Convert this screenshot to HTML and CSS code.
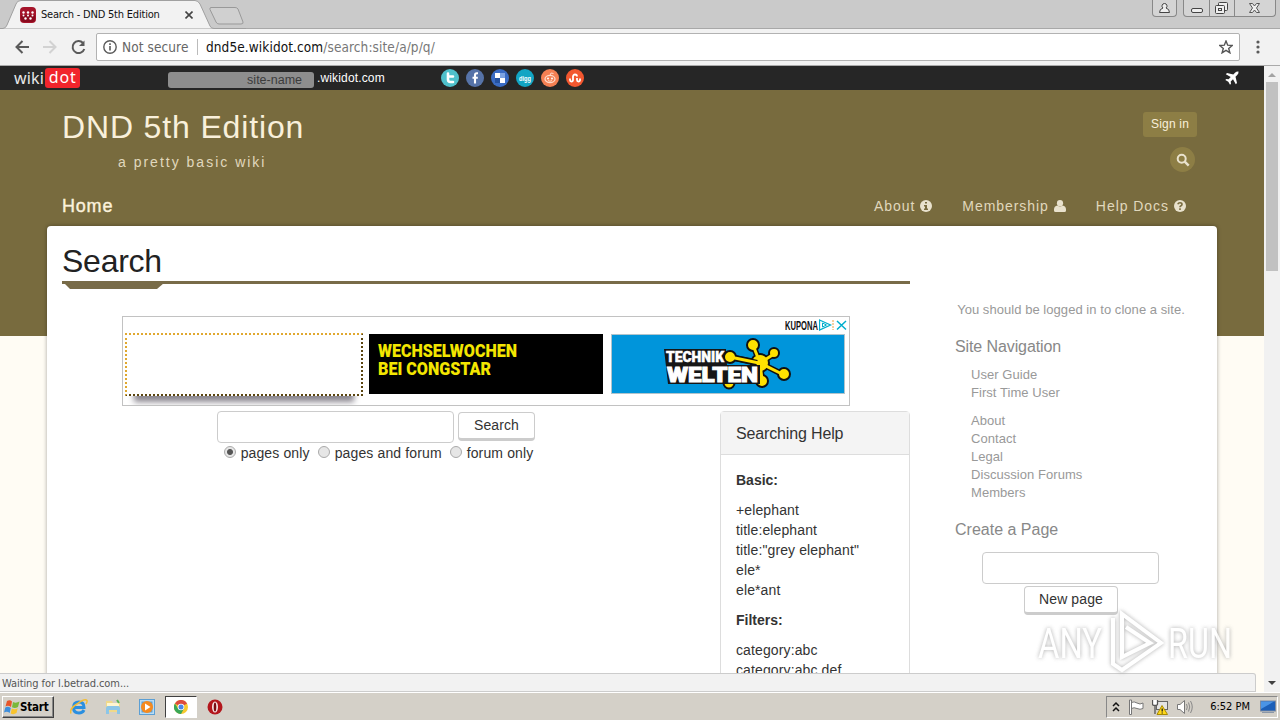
FILE: index.html
```html
<!DOCTYPE html>
<html lang="en">
<head>
    <meta charset="UTF-8">
    <meta name="viewport" content="width=device-width, initial-scale=1.0">
    <title>Search - DND 5th Edition</title>
    <link rel="stylesheet" href="styles.css">
</head>
<body>
    <div class="tabstrip">
        <svg class="tab-shape" width="246" height="29" viewBox="0 0 246 29">
            <path d="M0 28.500H3Q6 28 7 25L16 4Q17 .5 21 .5H195Q198 .5 200 4L210 26Q211 28.500 214 28.500H246V29H0Z" fill="#f2f2f2" stroke="#a0a0a0"/>
            <path d="M211 7.500H235Q237 7.500 238 9L243 22Q243.500 24 241 24H219Q217 24 216 22L210 9.500Q209.500 7.500 211 7.500Z" fill="#d0d0d0" stroke="#999"/>
        </svg>
        <div class="tab">
            <svg width="16" height="16" viewBox="0 0 16 16">
                <rect width="16" height="16" rx="4" fill="#a5142a"/>
                <path d="M1 8H15V12Q15 15 12 15H4Q1 15 1 12Z" fill="#8a0a1e"/>
                <g fill="#fff"><circle cx="3.500" cy="5.500" r="1.200"/><circle cx="8" cy="5.500" r="1.200"/><circle cx="12.500" cy="5.500" r="1.200"/><circle cx="3.500" cy="8.500" r="1"/><circle cx="8" cy="8.500" r="1"/><circle cx="12.500" cy="8.500" r="1"/><circle cx="5.500" cy="11.500" r="1.200"/><circle cx="10.500" cy="11.500" r="1.200"/></g>
            </svg>
            <span class="tab-title">Search - DND 5th Edition</span>
            <svg width="8" height="8" viewBox="0 0 8 8"><path d="M.5 .5L7.500 7.500M7.500 .5L.5 7.500" stroke="#444" stroke-width="1.600"/></svg>
        </div>
        <div class="window-buttons">
            <span class="win user"><svg width="24" height="16" viewBox="0 0 24 16"><path d="M11.500 3.500a2.500 2.500 0 0 1 1.500 4.500Q16.500 9 16.500 12.500H6.500Q6.500 9 10 8A2.500 2.500 0 0 1 11.500 3.500Z" fill="#eee" stroke="#444"/></svg></span>
            <span class="win group">
                <svg width="93" height="16" viewBox="0 0 93 16">
                    <path d="M25.500 0V16M50.500 0V16" stroke="#888"/>
                    <rect x="7.500" y="8.500" width="11" height="4" rx="1.500" fill="#eee" stroke="#444"/>
                    <rect x="34.500" y="2.500" width="9" height="8" rx="1" fill="#eee" stroke="#444"/>
                    <rect x="31.500" y="5.500" width="9" height="8" rx="1" fill="#eee" stroke="#444"/>
                    <rect x="34.500" y="8.500" width="3" height="2" fill="none" stroke="#444"/>
                    <path d="M65.500 3.500H68.500L70.500 6L72.500 3.500H75.500L72.500 8L75.500 12.500H72.500L70.500 10L68.500 12.500H65.500L68.500 8Z" fill="#eee" stroke="#555"/>
                </svg>
            </span>
        </div>
    </div>

    <div class="toolbar">
        <svg class="nav-icons" width="76" height="18" viewBox="0 0 76 18" fill="none" stroke="#5a5a5a" stroke-width="2">
            <path d="M16 9H4M9.500 3L3.500 9L9.500 15"/>
            <path d="M30 9H42M36.500 3L42.500 9L36.500 15" stroke="#d2d2d2"/>
            <path d="M70 5A6 6 0 1 0 71.300 11"/><path d="M71.500 2.500V8H66Z" fill="#5a5a5a" stroke="none"/>
        </svg>
        <div class="address">
            <svg width="14" height="14" viewBox="0 0 14 14"><circle cx="7" cy="7" r="6.200" fill="none" stroke="#5a5a5a" stroke-width="1.400"/><path d="M7 6V10.500M7 3.300V4.900" stroke="#5a5a5a" stroke-width="1.600"/></svg>
            <span class="not-secure">Not secure</span>
            <span class="url">dnd5e.wikidot.com<span class="path">/search:site/a/p/q/</span></span>
            <svg class="star" width="14" height="14" viewBox="0 0 14 14"><path d="M7 1L8.700 5.200L13.200 5.500L9.700 8.400L10.900 12.800L7 10.300L3.100 12.800L4.300 8.400L.8 5.500L5.300 5.200Z" fill="none" stroke="#555" stroke-width="1.400"/></svg>
        </div>
        <svg class="menu" width="4" height="14" viewBox="0 0 4 14" fill="#5a5a5a"><circle cx="2" cy="2" r="1.600"/><circle cx="2" cy="7" r="1.600"/><circle cx="2" cy="12" r="1.600"/></svg>
    </div>

    <div class="viewport">
        <div class="page">
            <div class="topbar">
                <div class="wikidot-logo">wiki<span>dot</span></div>
                <div class="site-name">site-name</div>
                <span class="domain">.wikidot.com</span>
                <div class="social">
                    <svg width="18" height="18" viewBox="0 0 18 18"><circle cx="9" cy="9" r="9" fill="#4fc0cb"/><path d="M7 4.500V10.500Q7 13 9.500 13H12M7 7.500H12" fill="none" stroke="#fff" stroke-width="2.600" stroke-linecap="round"/></svg>
                    <svg width="18" height="18" viewBox="0 0 18 18"><circle cx="9" cy="9" r="9" fill="#5673a8"/><path d="M12 4.300H10.800Q9 4.300 9 6.300V14.500M6.500 8.800H11.800" fill="none" stroke="#fff" stroke-width="2.100"/></svg>
                    <svg width="18" height="18" viewBox="0 0 18 18"><circle cx="9" cy="9" r="9" fill="#3a6cc4"/><path d="M4 4H9V9H4ZM9 9H14V14H9Z" fill="#fff"/><path d="M9 4H14V9H9Z" fill="#7da4e3"/><path d="M4 9H9V14H4Z" fill="#2552a0"/></svg>
                    <svg width="18" height="18" viewBox="0 0 18 18"><circle cx="9" cy="9" r="9" fill="#12a5c4"/><text x="3" y="11.500" textLength="12" lengthAdjust="spacingAndGlyphs" class="digg">digg</text></svg>
                    <svg width="18" height="18" viewBox="0 0 18 18"><circle cx="9" cy="9" r="9" fill="#f58053"/><ellipse cx="9" cy="10" rx="5" ry="3.600" fill="none" stroke="#ffd9c8" stroke-width="1.300"/><circle cx="7" cy="9.500" r="1" fill="#fff"/><circle cx="11" cy="9.500" r="1" fill="#fff"/><path d="M9 6.500L10 4L12.500 4.500M7 11.500Q9 13 11 11.500" fill="none" stroke="#ffd9c8"/></svg>
                    <svg width="18" height="18" viewBox="0 0 18 18"><circle cx="9" cy="9" r="9" fill="#f3572f"/><path d="M4 9.500V11A1.500 1.500 0 0 0 7 11V7.500A2 2 0 0 1 11 7.500M11 9V11A1.500 1.500 0 0 0 14 11V9.500" fill="none" stroke="#fff" stroke-width="1.800"/></svg>
                </div>
                <svg class="plane" width="14" height="14" viewBox="0 0 14 14"><path d="M13.500 .5Q11.500 .2 10 1.800L8.300 3.500L2 2L.8 3.200L5.700 6L3.600 8.300L1.300 8L.3 9L3.300 10.700L5 13.700L6 12.700L5.700 10.400L8 8.300L10.800 13.200L12 12L10.500 5.700L12.200 4Q13.800 2.500 13.500 .5Z" fill="#fff"/></svg>
            </div>

            <div class="header">
                <div class="brand">
                    <div class="site-title">DND 5th Edition</div>
                    <div class="tagline">a pretty basic wiki</div>
                </div>
                <div class="account">
                    <span class="sign-in">Sign in</span>
                    <span class="search-toggle"><svg width="14" height="14" viewBox="0 0 14 14" fill="none" stroke="#e9e2cd"><circle cx="5.700" cy="5.700" r="4" stroke-width="2"/><path d="M8.700 8.700L12.700 12.700" stroke-width="2.400"/></svg></span>
                </div>
            </div>

            <div class="navbar">
                <span class="home">Home</span>
                <span class="nav-item">About <svg width="12" height="12" viewBox="0 0 12 12"><circle cx="6" cy="6" r="6" fill="#e9e2cd"/><path d="M5 2H7V3.500H5ZM4 5H7V8.500H8V10H4V8.500H5V6.500H4Z" fill="#786b3e"/></svg></span>
                <span class="nav-item">Membership <svg width="12" height="12" viewBox="0 0 12 12" fill="#e9e2cd"><circle cx="6" cy="3.200" r="3.100"/><path d="M3.500 5.500Q6 7.500 8.500 5.500Q12 6 12 9.500V10.500Q12 12 10.500 12H1.500Q0 12 0 10.500V9.500Q0 6 3.500 5.500Z"/></svg></span>
                <span class="nav-item">Help Docs <svg width="12" height="12" viewBox="0 0 12 12"><circle cx="6" cy="6" r="6" fill="#e9e2cd"/><path d="M3.800 4.300Q4.300 2.800 6 2.800Q8 2.800 8 4.400Q8 5.300 6.700 5.900Q6 6.300 6 7.300M6 8.300V10" fill="none" stroke="#786b3e" stroke-width="1.600"/></svg></span>
            </div>

            <div class="container">
                <div class="main">
                    <h1 class="page-title"><span>Search</span></h1>
                    <div class="ad">
                        <div class="ad-top">
                            <svg width="34" height="12" viewBox="0 0 34 12"><text x="0" y="10.500" textLength="33" lengthAdjust="spacingAndGlyphs" class="kupona">KUPONA</text></svg>
                            <svg width="28" height="12" viewBox="0 0 28 12" fill="none" stroke="#00aecd"><path d="M.5 1L11.500 6L.5 11Z" stroke-width="1.300"/><path d="M3.500 4V8L7.500 6Z"/><path d="M14 1V11" stroke="#f0a040" stroke-dasharray="2 1"/><path d="M18 2L27 10.500M27 2L18 10.500" stroke-width="1.500"/></svg>
                        </div>
                        <div class="ad-cards">
                            <div class="card-empty"></div>
                            <div class="card-congstar">
                                <svg width="234" height="60" viewBox="0 0 234 60">
                                    <text x="9" y="23" textLength="139" lengthAdjust="spacingAndGlyphs">WECHSELWOCHEN</text>
                                    <text x="9" y="41" textLength="113" lengthAdjust="spacingAndGlyphs">BEI CONGSTAR</text>
                                </svg>
                            </div>
                            <div class="card-technik">
                                <svg width="234" height="60" viewBox="0 0 234 60">
                                    <g stroke="#111" stroke-width="2" fill="#ffe100">
                                        <path d="M148 28L141 10M148 28L162 19M148 28L172 40M148 28L118 22M148 28L150 45" stroke-width="6"/>
                                        <circle cx="141" cy="10" r="6"/><circle cx="162" cy="18" r="5"/><circle cx="172" cy="39" r="6"/><circle cx="150" cy="46" r="6"/><circle cx="117" cy="48" r="5.500"/>
                                        <circle cx="148" cy="28" r="9"/>
                                        <path d="M148 28L141 10M148 28L162 19M148 28L172 40M148 28L150 45" stroke="#ffe100" stroke-width="3"/>
                                    </g>
                                    <path d="M52 14H114L115 30H148V49H56Z" fill="#161616"/>
                                    <path d="M118 22L145 28" stroke="#111" stroke-width="6"/><circle cx="118" cy="22" r="6" fill="#ffe100" stroke="#111" stroke-width="2"/><path d="M118 22L147 28" stroke="#ffe100" stroke-width="3"/>
                                    <text x="54" y="27" textLength="58" lengthAdjust="spacingAndGlyphs" class="technik">TECHNIK</text>
                                    <text x="55" y="47" textLength="91" lengthAdjust="spacingAndGlyphs" class="welten">WELTEN</text>
                                </svg>
                            </div>
                        </div>
                    </div>
                    <div class="search-row">
                        <div class="search-form">
                            <div class="search-line">
                                <span class="field"></span>
                                <span class="btn">Search</span>
                            </div>
                            <div class="options">
                                <span class="option"><i class="radio checked"></i>pages only</span>
                                <span class="option"><i class="radio"></i>pages and forum</span>
                                <span class="option"><i class="radio"></i>forum only</span>
                            </div>
                        </div>
                        <div class="panel">
                            <div class="panel-heading">Searching Help</div>
                            <div class="panel-body">
                                <p><strong>Basic:</strong></p>
                                <p>+elephant<br>title:elephant<br>title:"grey elephant"<br>ele*<br>ele*ant</p>
                                <p><strong>Filters:</strong></p>
                                <p>category:abc<br>category:abc,def</p>
                            </div>
                        </div>
                    </div>
                </div>
                <div class="side">
                    <p class="clone-note">You should be logged in to clone a site.</p>
                    <h2>Site Navigation</h2>
                    <ul>
                        <li>User Guide</li>
                        <li>First Time User</li>
                    </ul>
                    <ul>
                        <li>About</li>
                        <li>Contact</li>
                        <li>Legal</li>
                        <li>Discussion Forums</li>
                        <li>Members</li>
                    </ul>
                    <h2 class="create">Create a Page</h2>
                    <div class="new-page">
                        <span class="field"></span>
                        <span class="btn">New page</span>
                    </div>
                </div>
            </div>
        </div>

        <div class="scrollbar">
            <svg width="16" height="16" viewBox="0 0 16 16"><path d="M4 11L8 7L12 11Z" fill="#a3a3a3"/></svg>
            <div class="thumb"></div>
            <svg width="16" height="16" viewBox="0 0 16 16"><path d="M4 5H12L8 9Z" fill="#404040"/></svg>
        </div>

        <div class="status">Waiting for l.betrad.com...</div>

        <svg class="watermark" width="220" height="70" viewBox="0 0 220 70">
            <text x="4" y="50" textLength="64" lengthAdjust="spacingAndGlyphs">ANY</text>
            <text x="134" y="50" textLength="64" lengthAdjust="spacingAndGlyphs">RUN</text>
            <path d="M79 10V56L88 62L127 35L88 6V49L116 35L92 19" fill="none" stroke="#fff" stroke-width="4"/>
        </svg>
    </div>

    <div class="taskbar">
        <div class="start">
            <svg width="16" height="16" viewBox="0 0 16 16"><path d="M3 2Q6 .5 8 2.500L7 8Q4 6 1.500 7.500Z" fill="#e8562a"/><path d="M9 3Q12 4.500 15.500 2.500L14 8Q11 10 8 8.300Z" fill="#7ab83a"/><path d="M1.300 8.500Q4 7 6.800 9L5.700 14Q3 12 0 13.500Z" fill="#3f8fdc"/><path d="M7.800 9.500Q11 11 13.700 9.200L12.500 14Q9.500 16 6.700 14.500Z" fill="#f9c42d"/></svg>
            <b>Start</b>
        </div>
        <div class="launch">
            <span class="task"><svg width="18" height="16" viewBox="0 0 18 16"><path d="M14 11Q12.500 14 9 14Q3.500 14 3.500 8.500Q3.500 3 9 3Q14 3 14 8.500H5" fill="none" stroke="#2a8fe0" stroke-width="3"/><path d="M1 14.500Q-1 10 7 5Q15 -1 17 1.500Q17.500 2.500 16 5" fill="none" stroke="#f3bd35" stroke-width="1.500"/></svg></span>
            <span class="task"><svg width="18" height="16" viewBox="0 0 18 16"><path d="M2 2H8L9 4H16V13H2Z" fill="#f0d98a"/><path d="M3 4H15V7H3Z" fill="#fff6cf"/><path d="M2 9Q2 7 4 7H14Q16 7 16 9V15H13V11H5V15H2Z" fill="#8cc6e8"/><path d="M13 1L15 4" stroke="#5bb553" stroke-width="2"/></svg></span>
            <span class="task"><svg width="16" height="16" viewBox="0 0 16 16"><rect x=".5" y=".5" width="15" height="15" fill="#b9dcf4" stroke="#5c9fd4"/><rect x="2.500" y="2.500" width="11" height="11" fill="#5c9fd4"/><circle cx="8" cy="8" r="6" fill="#f58a1f"/><path d="M6 4.500L11.500 8L6 11.500Z" fill="#fff"/></svg></span>
            <span class="task active"><svg width="14" height="14" viewBox="0 0 14 14"><circle cx="7" cy="7" r="7" fill="#f7c92f"/><path d="M7 7L.9 3.500A7 7 0 0 1 13.100 3.500Z" fill="#dd4b3e"/><path d="M.9 3.500A7 7 0 0 0 7 14L10 8.500L7 10L4 8.500Z" fill="#3aa757"/><circle cx="7" cy="7" r="3.300" fill="#fff"/><circle cx="7" cy="7" r="2.500" fill="#4a86e8"/></svg></span>
            <span class="task"><svg width="16" height="16" viewBox="0 0 16 16"><circle cx="8" cy="8" r="7.500" fill="#b3161c"/><ellipse cx="8" cy="8" rx="3" ry="5.500" fill="#f7e8e8"/><ellipse cx="8" cy="8" rx="1.300" ry="4.500" fill="#7a0c12"/></svg></span>
        </div>
        <div class="tray">
            <svg width="8" height="12" viewBox="0 0 8 12" fill="none" stroke="#111" stroke-width="1.500"><path d="M1 5L4 2L7 5M1 10L4 7L7 10"/></svg>
            <svg width="16" height="16" viewBox="0 0 16 16"><path d="M3.500 3.500Q6 2 9 4Q12 6 15 4V9.500Q12 11 9 9.500Q6 8 3.500 9.500Z" fill="#fff" stroke="#777"/><path d="M1.500 1V15.500H3.500V1Z" fill="#fff" stroke="#777"/></svg>
            <svg width="16" height="16" viewBox="0 0 16 16"><rect x="4.500" y="2.500" width="11" height="8" fill="#e4e4e4" stroke="#666"/><path d="M.5 1V5Q.5 6.500 3 6.500Q5.500 6.500 5.500 5V1M3 6V15" fill="#fff" stroke="#555" stroke-width="1.300"/><path d="M10 6.500L15.500 15.500H5Z" fill="#ffd819" stroke="#a88a00"/><path d="M10.200 9.500V12.500M10.200 13.500V14.500" stroke="#222" stroke-width="1.300"/></svg>
            <svg width="18" height="16" viewBox="0 0 18 16"><path d="M1.500 5.500H4L8.500 1.500V14.500L4 10.500H1.500Z" fill="#fff" stroke="#777"/><path d="M10.500 5Q12 8 10.500 11M12.500 3.500Q15 8 12.500 12.500M14.500 2Q18 8 14.500 14" fill="none" stroke="#888"/></svg>
            <span class="clock">6:52 PM</span>
            <svg width="16" height="14" viewBox="0 0 16 14"><rect x=".5" y="1" width="15" height="10" fill="#1c5fb8" stroke="#7c8aa0"/><path d="M1 1.500H14L1 9Z" fill="#4a94e6"/><path d="M2 12.500H14" stroke="#8b97a8"/></svg>
        </div>
    </div>
</body>
</html>
```
FILE: styles.css
```css
* {
    box-sizing: border-box;
}

body {
    margin: 0;
    width: 1280px;
    height: 720px;
    overflow: hidden;
    display: flex;
    flex-direction: column;
    font-family: "Liberation Sans", Arial, sans-serif;
    font-size: 14px;
    line-height: 20px;
    color: #333;
}

svg {
    display: block;
    flex: none;
}

h1, h2, p, ul {
    margin: 0;
    padding: 0;
    font-weight: normal;
}

/* browser window */
.tabstrip {
    position: relative;
    height: 29px;
    flex: none;
    display: flex;
    justify-content: space-between;
    background: #cacaca;
    border-bottom: 1px solid #a8a8a8;
}

.tab-shape {
    position: absolute;
    left: 0;
    top: 0;
}

.tab {
    position: relative;
    display: flex;
    align-items: center;
    width: 193px;
    height: 29px;
    padding-left: 20px;
}

.tab-title {
    flex: 1;
    margin-left: 5px;
    font: 11px "DejaVu Sans Condensed", sans-serif;
    letter-spacing: -0.2px;
    color: #111;
}

.window-buttons {
    display: flex;
    gap: 6px;
    padding-right: 4px;
}

.win {
    height: 17px;
    border: 1px solid #888;
    border-top: 0;
    border-radius: 0 0 4px 4px;
    background: #d4d4d4;
}

.win.user {
    width: 25px;
}

.win.group {
    width: 93px;
}

.toolbar {
    height: 37px;
    flex: none;
    display: flex;
    align-items: center;
    background: #f2f2f2;
    border-bottom: 1px solid #aaa;
    padding: 0 20px 0 13px;
}

.address {
    flex: 1;
    height: 28px;
    margin: 0 16px 0 7px;
    padding: 0 6px;
    display: flex;
    align-items: center;
    background: #fff;
    border: 1px solid #b2b2b2;
    border-radius: 2px;
    font: 13.5px "DejaVu Sans Condensed", sans-serif;
}

.not-secure {
    width: 76px;
    margin-left: 5px;
    color: #666;
    letter-spacing: 0.1px;
    border-right: 1px solid #bbb;
}

.url {
    margin-left: 8px;
    color: #111;
    letter-spacing: 0.1px;
}

.path {
    color: #777;
}

.star {
    margin-left: auto;
}

.viewport {
    position: relative;
    flex: 1;
    min-height: 0;
    display: flex;
}

.page {
    width: 1264px;
    height: 626px;
    overflow: hidden;
    background: linear-gradient(#786b3e 270px, #fffcf4 270px);
}

/* wikidot bar */
.topbar {
    height: 24px;
    display: flex;
    align-items: center;
    background: #262626;
    padding: 0 25px 0 14px;
    color: #fff;
}

.wikidot-logo {
    width: 154px;
    display: flex;
    align-items: center;
    font: 16px "Noto Sans", sans-serif;
    line-height: 20px;
    letter-spacing: 0.2px;
    color: #e8e8e8;
}

.wikidot-logo span {
    width: 35px;
    height: 20px;
    line-height: 19px;
    text-align: center;
    background: #f1252c;
    border-radius: 3px;
    color: #fff;
    margin-left: 1px;
    letter-spacing: 0.8px;
}

.site-name {
    width: 146px;
    height: 16px;
    margin-top: 4px;
    padding-right: 12px;
    line-height: 16px;
    text-align: right;
    font-size: 12.5px;
    background: #8e8e8e;
    border-radius: 3px;
    color: #3c3c3c;
}

.domain {
    width: 125px;
    margin-left: 3px;
    font-size: 12px;
    letter-spacing: 0.15px;
}

.social {
    display: flex;
    gap: 7px;
    margin-left: -1px;
}

.digg {
    font: bold 7px "Liberation Sans", sans-serif;
    fill: #fff;
}

.plane {
    margin-left: auto;
}

/* header */
.header {
    height: 97px;
    display: flex;
    justify-content: space-between;
    padding: 0 67px 0 62px;
    color: #f9f0db;
}

.site-title {
    margin-top: 19px;
    font-size: 32px;
    line-height: 36px;
    letter-spacing: 0.85px;
}

.tagline {
    margin: 7px 0 0 56px;
    letter-spacing: 2px;
    color: #e0d8bd;
}

.account {
    display: flex;
    flex-direction: column;
    align-items: flex-end;
    padding-top: 22px;
    gap: 10px;
}

.sign-in {
    width: 54px;
    height: 25px;
    line-height: 25px;
    text-align: center;
    font-size: 12px;
    letter-spacing: 0.2px;
    background: #8d7e45;
    border-radius: 3px;
}

.search-toggle {
    width: 25px;
    height: 25px;
    margin-right: 2px;
    display: flex;
    align-items: center;
    justify-content: center;
    background: #8d7e45;
    border-radius: 50%;
}

.navbar {
    height: 39px;
    display: flex;
    align-items: center;
    padding: 0 78px 2px 62px;
    gap: 30px;
    letter-spacing: 0.95px;
    color: #e0d8bd;
}

.home {
    margin-right: auto;
    font-size: 18px;
    letter-spacing: 0.8px;
    color: #fbf1db;
    -webkit-text-stroke: 0.4px #fbf1db;
}

.nav-item {
    display: flex;
    align-items: center;
    gap: 5px;
}

/* content */
.container {
    width: 1170px;
    height: 600px;
    margin-left: 47px;
    padding: 0 15px;
    display: flex;
    gap: 30px;
    background: #fff;
    border-radius: 4px;
    box-shadow: 0 0 4px rgba(0, 0, 0, 0.35);
}

.main {
    width: 848px;
}

.page-title {
    position: relative;
    height: 58px;
    padding-top: 17px;
    border-bottom: 3px solid #786b48;
    font-size: 32px;
    line-height: 36px;
    letter-spacing: -0.25px;
    color: #222;
}

.page-title::after {
    content: "";
    position: absolute;
    left: 0;
    top: 55px;
    width: 102px;
    height: 8px;
    background: #786b48;
    clip-path: polygon(0 0, 100% 0, 100% 2px, 95px 100%, 8px 100%);
}

.ad {
    width: 728px;
    height: 90px;
    margin: 32px auto 5px;
    border: 1px solid #c2c2c2;
    overflow: hidden;
}

.ad-top {
    height: 16px;
    display: flex;
    align-items: center;
    justify-content: flex-end;
    padding-right: 2px;
}

.kupona {
    font: bold 12px "Liberation Sans", sans-serif;
    fill: #111;
}

.ad-cards {
    display: flex;
    gap: 6px;
    padding-left: 2px;
}

.card-empty {
    width: 238px;
    height: 63px;
    border: 2px dotted #e0a830;
    border-right-color: #5b4510;
    border-bottom-color: #5b4510;
    background: #fff;
    box-shadow: 0 15px 6px -9px #8b8790;
}

.card-congstar {
    width: 234px;
    height: 60px;
    margin-top: 1px;
    background: #000;
}

.card-congstar text {
    font: 900 18px Roboto, sans-serif;
    fill: #f3e600;
}

.card-technik {
    width: 234px;
    height: 60px;
    margin: 1px 0 0 2px;
    background: #0095db;
    border: 1px solid #b0c4cc;
    overflow: hidden;
}

.technik, .welten {
    font: 900 14px Roboto, sans-serif;
    fill: #fff;
    stroke: #fff;
    stroke-width: 0.5px;
}

.welten {
    font-size: 21px;
    stroke-width: 1px;
}

.search-row {
    display: flex;
    gap: 30px;
}

.search-form {
    flex: 1;
    display: flex;
    flex-direction: column;
    align-items: center;
}

.search-line {
    display: flex;
    gap: 4px;
}

.field {
    width: 237px;
    height: 32px;
    border: 1px solid #ccc;
    border-radius: 4px;
    background: #fff;
}

.btn {
    width: 77px;
    height: 29px;
    margin-top: 1px;
    line-height: 25px;
    text-align: center;
    letter-spacing: 0.1px;
    border: 1px solid #ccc;
    border-bottom-width: 3px;
    border-radius: 4px;
    background: #fff;
}

.options {
    display: flex;
    gap: 8px;
    margin-left: 5px;
}

.option {
    display: flex;
    align-items: center;
    letter-spacing: 0.13px;
}

.radio {
    width: 12px;
    height: 12px;
    margin: -2px 5px 0 0;
    border: 1px solid #aaa;
    border-radius: 50%;
    background: #e6e6e6;
}

.radio.checked {
    background: radial-gradient(circle, #555 2.5px, #e6e6e6 3.5px);
}

.panel {
    width: 190px;
    height: 340px;
    border: 1px solid #ddd;
    border-radius: 4px;
}

.panel-heading {
    height: 43px;
    padding-left: 15px;
    line-height: 43px;
    font-size: 16px;
    letter-spacing: -0.15px;
    background: #f4f4f4;
    border-bottom: 1px solid #ddd;
}

.panel-body {
    padding: 15px;
    white-space: nowrap;
    letter-spacing: 0.12px;
}

.panel-body strong {
    letter-spacing: 0;
}

.panel-body p {
    margin-bottom: 10px;
}

/* sidebar */
.side {
    width: 262px;
    padding-top: 75px;
    font-size: 13px;
    line-height: 18px;
    letter-spacing: 0.05px;
    color: #999;
}

.clone-note {
    text-align: center;
    white-space: nowrap;
}

.side h2 {
    margin: 18px 0 9px 15px;
    font-size: 16px;
    line-height: 20px;
    letter-spacing: -0.1px;
    color: #888;
}

.side ul {
    list-style: none;
    padding-left: 31px;
    margin-bottom: 10px;
}

.side h2.create {
    margin: 18px 0 12px 15px;
    letter-spacing: 0;
}

.new-page {
    display: flex;
    flex-direction: column;
    align-items: center;
    font-size: 14px;
    color: #333;
}

.new-page .field {
    width: 177px;
    margin-right: 1px;
}

.new-page .btn {
    width: 94px;
    margin-top: 2px;
}

.scrollbar {
    width: 16px;
    display: flex;
    flex-direction: column;
    background: #f1f1f1;
}

.thumb {
    width: 12px;
    height: 189px;
    margin: 0 auto auto;
    background: #c1c1c1;
}

.status {
    position: absolute;
    left: 0;
    bottom: 0;
    width: 1256px;
    height: 19px;
    padding-left: 2px;
    border: 1px solid #ccc;
    border-left: 0;
    border-radius: 0 3px 0 0;
    background: #f2f2f2;
    font: 11px "DejaVu Sans Condensed", sans-serif;
    line-height: 19px;
    letter-spacing: -0.08px;
    color: #555;
}

.watermark {
    position: absolute;
    left: 1034px;
    top: 542px;
    opacity: 0.8;
    filter: drop-shadow(0 0 2px #999);
}

.watermark text {
    font: 42px Roboto, sans-serif;
    fill: #fff;
}

/* taskbar */
.taskbar {
    height: 28px;
    flex: none;
    display: flex;
    align-items: center;
    background: #d4d0c8;
    border-top: 1px solid #fff;
    padding: 0 2px;
}

.start {
    width: 52px;
    height: 22px;
    display: flex;
    align-items: center;
    gap: 0;
    padding-left: 1px;
    border: 1px solid;
    border-color: #fff #404040 #404040 #fff;
    box-shadow: inset -1px -1px #888;
}

.start b {
    font: bold 11.5px "DejaVu Sans Condensed", sans-serif;
    letter-spacing: -0.2px;
    color: #000;
}

.launch {
    display: flex;
    gap: 2px;
    margin-left: 9px;
}

.task {
    width: 32px;
    height: 22px;
    display: flex;
    align-items: center;
    justify-content: center;
}

.task.active {
    background: #fff;
    border: 1px solid;
    border-color: #404040 #fff #fff #404040;
}

.tray {
    width: 172px;
    height: 22px;
    margin-left: auto;
    padding: 0 1px 0 5px;
    display: flex;
    align-items: center;
    gap: 8px;
    border: 1px solid;
    border-color: #888 #fff #fff #888;
}

.clock {
    margin-left: auto;
    margin-right: 2px;
    white-space: nowrap;
    font: 11px "DejaVu Sans Condensed", sans-serif;
    color: #000;
}
```
